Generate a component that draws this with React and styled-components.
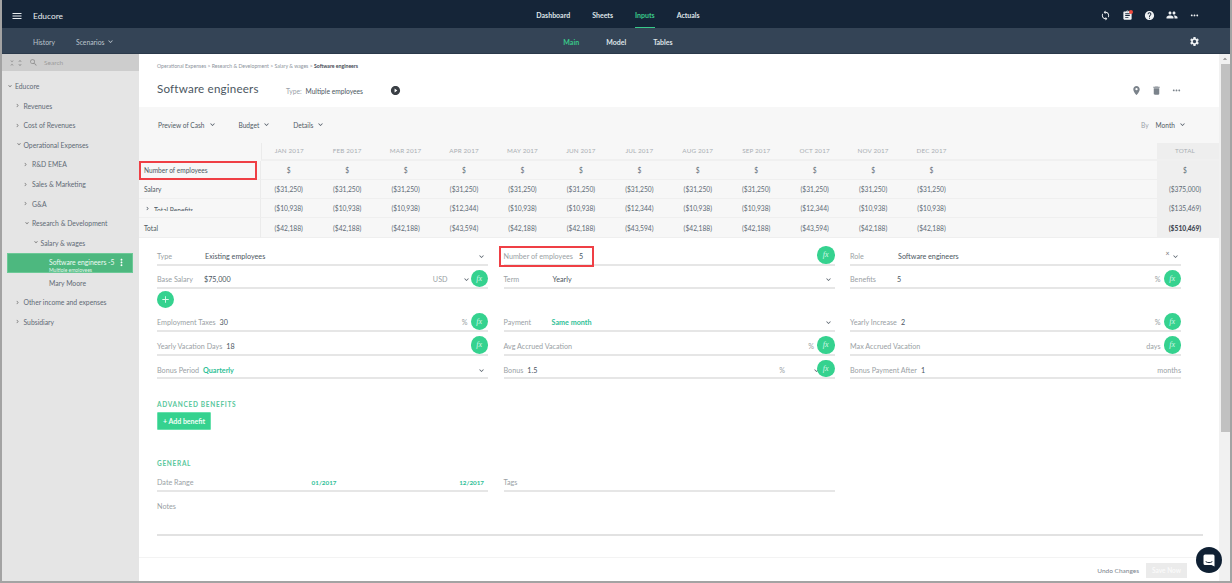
import React from 'react';
import styled, { createGlobalStyle } from 'styled-components';
import { MdMenu, MdSync, MdAssignment, MdHelp, MdPeople, MdMoreHoriz, MdMoreVert, MdSettings, MdPlace, MdDelete, MdExpandMore, MdPlayCircleFilled, MdSearch, MdUnfoldLess, MdUnfoldMore, MdChevronRight, MdAdd, MdArrowDropUp } from 'react-icons/md';

const Global = createGlobalStyle`
  html, body { margin: 0; padding: 0; height: 583px; overflow: hidden; }
  body { font-family: Lato, "Liberation Sans", sans-serif; color: #4a5562; }
  * { box-sizing: border-box; }
`;
const Frame = styled.div`
  width: 1232px; height: 583px; background: #a3a3a3; padding: 0 2px 2px;
  display: flex; flex-direction: column; position: relative; overflow: hidden;
`;
const TopBar = styled.header`
  height: 28px; background: #152538; color: #e8ecef; display: grid;
  grid-template-columns: 1fr auto 1fr; align-items: center; flex: none;
`;
const Brand = styled.div`display: flex; align-items: center; font-size: 8.4px; gap: 10px; padding: 3px 0 0 9px;`;
const NavGroup = styled.nav`display: flex; align-self: stretch; gap: ${p => p.$gap}px; padding-left: 4px;`;
const NavLink = styled.a`
  display: flex; align-items: center; font-size: 7px; font-weight: 700; padding-top: ${p => p.$pt || 3}px;
  color: ${p => (p.$active ? '#39c98a' : '#dfe4e8')};
  border-bottom: 1px solid ${p => (p.$underline ? '#39c98a' : 'transparent')};
`;
const IconGroup = styled.div`
  display: flex; justify-content: flex-end; align-items: center; gap: ${p => p.$gap || 10.5}px;
  padding: ${p => p.$pt || 0}px ${p => p.$pr || 0}px 0 0; color: ${p => p.$color || '#eef1f3'};
`;
const BadgedIcon = styled.span`
  display: flex; position: relative;
  &::after { content: ''; position: absolute; top: 0; right: 0; width: 4px; height: 4px; border-radius: 50%; background: #ef4b3f; }
`;
const SubBar = styled.div`
  height: 26px; background: #344456; border-bottom: 1px solid #2a394a; color: #d5dbe0; display: grid;
  grid-template-columns: 1fr auto 1fr; align-items: center; flex: none;
`;
const SubLeft = styled.div`display: flex; align-items: center; gap: 21px; padding: 2px 0 0 31px; font-size: 6.8px; color: #bcc5cd;`;
const Inline = styled.span`display: inline-flex; align-items: center; gap: ${p => p.$gap || 1}px;`;
const Body = styled.div`flex: 1; min-height: 0; display: flex;`;
const Sidebar = styled.aside`width: 137px; flex: none; background: #e5e5e5; display: flex; flex-direction: column;`;
const SearchStrip = styled.div`
  height: 17px; background: #cdcdcd; display: flex; align-items: center; padding-left: 6px; color: #8d8d8d; font-size: 6.5px; flex: none;
`;
const SearchGlyph = styled.span`display: flex; margin: 0 6.5px 0 4.5px;`;
const SearchText = styled.span`color: #9c9c9c;`;
const Tree = styled.ul`list-style: none; margin: 0; padding: 5.3px 0 0;`;
const TreeItem = styled.li`
  height: 19.6px; display: flex; align-items: center; font-size: 6.8px; color: #5f6a75;
  padding-left: ${p => p.$level * 8.5 + 4}px; gap: 1px; white-space: nowrap;
`;
const TreeArrow = styled.span`display: flex; width: 8px; flex: none; color: #777; transform: rotate(${p => (p.$open ? 90 : 0)}deg) translateX(${p => (p.$open ? 0 : -1)}px);`;
const SelectedItem = styled.li`
  height: 20px; margin-left: 5px; width: 126px; background: #4db87f; color: #eefaf3; position: relative;
  padding: 3px 0 0 41px; font-size: 6.8px; line-height: 10.5px; overflow: hidden; white-space: nowrap;
  border: 1px solid #6cc997;
`;
const SubLabel = styled.div`font-size: 5px; line-height: 6px; color: #e6f7ed;`;
const Kebab = styled.span`position: absolute; right: 5px; top: 3px; display: flex; color: #fff;`;
const PlainLeaf = styled.li`
  height: 19.6px; display: flex; align-items: center; font-size: 6.8px; color: #5f6a75; padding: 1px 0 0 47px;
`;
const Main = styled.main`flex: 1; min-width: 0; display: flex; background: #fff;`;
const Content = styled.div`flex: 1; min-width: 0; display: flex; flex-direction: column;`;
const PageHead = styled.div`height: 53px; padding: 9px 37px 0 18px; flex: none;`;
const Crumbs = styled.div`font-size: 5.15px; color: #8c949c; height: 7px; line-height: 7px; white-space: nowrap; b { color: #3f4853; font-weight: 700; }`;
const TitleRow = styled.div`display: flex; align-items: center; margin-top: 7px; height: 24px;`;
const Title = styled.h1`margin: 0; font-size: 11.6px; font-weight: 400; color: #4c5762; letter-spacing: .2px; width: 129px; position: relative; top: -1px;`;
const TypeInfo = styled.span`font-size: 6.7px; color: #4c5762; width: 104px; padding-top: 3px; span { color: #98a0a8; margin-right: 2px; }`;
const PlayIcon = styled.span`display: flex; color: #3a3f45; margin-top: 2px;`;
const Spacer = styled.div`flex: 1;`;
const GrayBand = styled.section`background: #f7f7f7; flex: none; height: 130px; display: flex; flex-direction: column;`;
const FilterRow = styled.div`height: 36px; flex: none; display: flex; align-items: center; padding: 0 32px 1px 19px; font-size: 6.6px; color: #505a65; gap: 22px;`;
const ByLabel = styled.span`color: #9aa1a8; margin-right: -15px;`;
const Table = styled.div`
  display: grid; grid-template-columns: 122px repeat(12, 58.45px) 1fr 62px; grid-template-rows: 17.5px repeat(4, 19.3px); font-size: 6.7px; color: #606b76;
`;
const HeadCell = styled.div`
  display: flex; align-items: center; justify-content: center; color: #a9aeb3; font-size: 6.3px; letter-spacing: .15px;
  padding-right: ${p => (p.$total ? 6 : 3)}px;
  border-bottom: 2px solid ${p => (p.$blank ? 'transparent' : '#f0f0f0')};
  border-left: ${p => (p.$divider ? '1px solid #ebebeb' : 'none')};
  background: ${p => (p.$total ? '#eeeeee' : 'transparent')};
`;
const Cell = styled.div`
  display: flex; align-items: center; justify-content: center; background: ${p => (p.$total ? '#efefef' : 'transparent')};
  padding-right: ${p => (p.$total ? 6 : 3)}px;
  border-bottom: 1px solid #efefef; font-weight: ${p => (p.$bold ? 900 : 400)};
  color: ${p => (p.$bold ? '#3f4853' : '#606b76')};
`;
const LabelCell = styled.div`
  display: flex; align-items: center; padding-left: 5px; border-right: 1px solid #ebebeb; border-bottom: 1px solid #efefef;
  color: #4c5762; font-size: 6.6px; position: relative; white-space: nowrap;
`;
const Clipped = styled.span`display: block; height: 5px; overflow: hidden; line-height: 8px; margin-left: 3px;`;
const Marked = styled.span`
  position: absolute; left: 0; top: 0; width: 118px; height: 19.5px; border: 2px solid #ef3f45; pointer-events: none;
`;
const Form = styled.div`padding: 5px 38px 0 18px; flex: 1; min-height: 0; display: flex; flex-direction: column;`;
const FormGrid = styled.div`display: grid; grid-template-columns: 331px 331px 331px; column-gap: 15.5px;`;
const Field = styled.div`
  height: 23.6px; border-bottom: 2px solid #e6e6e6; display: flex; align-items: center; gap: ${p => p.$gap ?? 4}px; font-size: 7.2px; color: #4c5762;
  padding-top: 7px; white-space: nowrap;
`;
const Label = styled.span`color: #9a9fa5; width: ${p => (p.$w ? `${p.$w}px` : 'auto')}; flex: none;`;
const Value = styled.span`color: ${p => (p.$accent ? '#2fbf97' : '#4c5762')}; font-weight: ${p => (p.$accent ? 700 : 400)};`;
const Unit = styled.span`color: #9a9fa5; margin-left: auto; margin-right: ${p => p.$mr || 0}px;`;
const Chevron = styled.span`display: flex; margin-left: ${p => (p.$auto ? 'auto' : `${p.$ml || 0}px`)}; color: #555f69; flex: none; margin-right: ${p => p.$mr || 0}px;`;
const ClearMark = styled.span`margin-left: auto; margin-right: -4px; margin-top: -6px; font-size: 7px; color: #777;`;
const Fx = styled.span`
  width: 17.5px; height: 17.5px; border-radius: 50%; background: #35d28f; color: #d8f7e8; flex: none; display: flex; align-items: center; justify-content: center;
  font: italic 8px "Liberation Serif", serif; margin-left: ${p => (p.$tight ? '0' : 'auto')}; margin-top: -3px; position: relative;
`;
const Highlight = styled.span`
  display: flex; align-items: center; gap: 6px; position: relative;
  &::after { content: ''; position: absolute; left: -5px; right: -11px; top: -6px; bottom: -6px; border: 2px solid #ef3f45; pointer-events: none; }
`;
const PlusRow = styled.div`height: 17.4px; margin-top: 2px;`;
const PlusBtn = styled.span`width: 17px; height: 17px; border-radius: 50%; background: #35d28f; color: #dff9ec; display: flex; align-items: center; justify-content: center;`;
const SectionTitle = styled.div`
  font-size: 6.5px; font-weight: 700; color: #58c79c; letter-spacing: .7px; line-height: 8px; margin-top: ${p => p.$mt}px;
`;
const AddButton = styled.button`
  margin-top: 3px; width: 54px; height: 18px; background: #35d28f; border: 1px solid #67e0ac; border-radius: 1px; color: #f3fff9;
  font: 700 7px Lato, sans-serif; padding: 0; display: block;
`;
const DateField = styled(Field)`padding-right: 4px; gap: 0;`;
const DateValue = styled.span`
  color: #2fbf97; font-weight: 700; font-size: 6.3px; margin-left: ${p => (p.$last ? 'auto' : '118px')};
`;
const Notes = styled.div`
  margin-top: 4px; margin-right: -22px; height: 40px; border-bottom: 2px solid #e2e2e2; font-size: 7.2px; color: #9a9fa5; padding-top: 6px;
`;
const Footer = styled.footer`
  height: 24px; margin-top: auto; flex: none; border-top: 1px solid #f3f3f3; display: flex; align-items: center; justify-content: flex-end;
  padding: 1px 32px 0 0; gap: 7px; font-size: 6.5px; color: #7a838c;
`;
const SaveBtn = styled.button`
  width: 41px; height: 15px; border: 0; background: #ebebeb; color: #fafafa; font: 700 6.5px Lato, sans-serif; padding: 0;
`;
const Scrollbar = styled.div`width: 11px; flex: none; background: #f1f1f1; display: flex; flex-direction: column; align-items: center;`;
const ScrollArrow = styled.span`height: 10px; display: flex; align-items: center; color: #8a8a8a;`;
const ScrollThumb = styled.div`width: 9px; height: 368px; background: #c1c1c1; margin-left: 1px;`;
const Launcher = styled.div`
  position: absolute; right: 10px; bottom: 10px; width: 26px; height: 26px; border-radius: 50%; background: #0f2033;
  display: flex; align-items: center; justify-content: center; color: #fff;
`;

const months = ['JAN', 'FEB', 'MAR', 'APR', 'MAY', 'JUN', 'JUL', 'AUG', 'SEP', 'OCT', 'NOV', 'DEC'];
const quarterly = (a, b) => months.map((_, i) => ([3, 6, 9].includes(i) ? b : a));
const rows = [
  { key: 'n', values: Array(12).fill('$'), total: '$' },
  { key: 's', label: 'Salary', values: Array(12).fill('($31,250)'), total: '($375,000)' },
  { key: 'b', values: quarterly('($10,938)', '($12,344)'), total: '($135,469)' },
  { key: 't', label: 'Total', values: quarterly('($42,188)', '($43,594)'), total: '($510,469)', bold: true },
];
const Down = ({ size = 9 }) => <MdExpandMore size={size} />;

const tree1 = [
  [0, 'Educore', true], [1, 'Revenues'], [1, 'Cost of Revenues'], [1, 'Operational Expenses', true],
  [2, 'R&D EMEA'], [2, 'Sales & Marketing'], [2, 'G&A'], [2, 'Research & Development', true], [3, 'Salary & wages', true],
];

export default function App() {
  return (
    <Frame>
      <Global />
      <TopBar>
        <Brand><MdMenu size={12} />Educore</Brand>
        <NavGroup $gap={22}>
          <NavLink>Dashboard</NavLink>
          <NavLink>Sheets</NavLink>
          <NavLink $active $underline>Inputs</NavLink>
          <NavLink>Actuals</NavLink>
        </NavGroup>
        <IconGroup $gap={11} $pr={30} $pt={2}>
          <MdSync size={11} />
          <BadgedIcon><MdAssignment size={11} /></BadgedIcon>
          <MdHelp size={11} />
          <MdPeople size={12} />
          <MdMoreHoriz size={11} />
        </IconGroup>
      </TopBar>
      <SubBar>
        <SubLeft>
          <span>History</span>
          <Inline $gap={2}>Scenarios <MdExpandMore size={9} /></Inline>
        </SubLeft>
        <NavGroup $gap={27}>
          <NavLink $active $pt={3}>Main</NavLink>
          <NavLink $pt={3}>Model</NavLink>
          <NavLink $pt={3}>Tables</NavLink>
        </NavGroup>
        <IconGroup $pr={30} $pt={2}><MdSettings size={11} /></IconGroup>
      </SubBar>
      <Body>
        <Sidebar>
          <SearchStrip>
            <MdUnfoldLess size={8} />
            <MdUnfoldMore size={8} />
            <SearchGlyph><MdSearch size={9} /></SearchGlyph>
            <SearchText>Search</SearchText>
          </SearchStrip>
          <Tree>
            {tree1.map(([level, text, open]) => (
              <TreeItem key={text} $level={level}>
                <TreeArrow $open={open}><MdChevronRight size={7} /></TreeArrow>{text}
              </TreeItem>
            ))}
            <SelectedItem>
              Software engineers -5
              <SubLabel>Multiple employees</SubLabel>
              <Kebab><MdMoreVert size={11} /></Kebab>
            </SelectedItem>
            <PlainLeaf>Mary Moore</PlainLeaf>
            <TreeItem $level={1}><TreeArrow><MdChevronRight size={7} /></TreeArrow>Other income and expenses</TreeItem>
            <TreeItem $level={1}><TreeArrow><MdChevronRight size={7} /></TreeArrow>Subsidiary</TreeItem>
          </Tree>
        </Sidebar>
        <Main>
          <Content>
            <PageHead>
              <Crumbs>Operational Expenses &gt; Research &amp; Development &gt; Salary &amp; wages &gt; <b>Software engineers</b></Crumbs>
              <TitleRow>
                <Title>Software engineers</Title>
                <TypeInfo><span>Type:</span> Multiple employees</TypeInfo>
                <PlayIcon><MdPlayCircleFilled size={11} /></PlayIcon>
                <Spacer />
                <IconGroup $gap={9} $color="#7b838b" $pt={3}><MdPlace size={11} /><MdDelete size={11} /><MdMoreHoriz size={11} /></IconGroup>
              </TitleRow>
            </PageHead>
            <GrayBand>
              <FilterRow>
                <Inline $gap={3}>Preview of Cash <Down /></Inline>
                <Inline $gap={3}>Budget <Down /></Inline>
                <Inline $gap={3}>Details <Down /></Inline>
                <Spacer />
                <ByLabel>By</ByLabel>
                <Inline $gap={3}>Month <Down /></Inline>
              </FilterRow>
              <Table>
                <HeadCell $blank />
                {months.map((m, i) => <HeadCell key={m} $divider={i === 0}>{m} 2017</HeadCell>)}
                <HeadCell />
                <HeadCell $total>TOTAL</HeadCell>
                {rows.map(r => (
                  <React.Fragment key={r.key}>
                    <LabelCell>
                      {r.key === 'n' && <>Number of employees<Marked /></>}
                      {r.label}
                      {r.key === 'b' && <><MdChevronRight size={7} /><Clipped>Total Benefits</Clipped></>}
                    </LabelCell>
                    {r.values.map((v, i) => <Cell key={i}>{v}</Cell>)}
                    <Cell />
                    <Cell $total $bold={r.bold}>{r.total}</Cell>
                  </React.Fragment>
                ))}
              </Table>
            </GrayBand>
            <Form>
              <FormGrid>
                <Field $gap={0}><Label $w={48}>Type</Label><Value>Existing employees</Value><Chevron $auto $mr={2}><Down /></Chevron></Field>
                <Field><Highlight><Label>Number of employees</Label><Value>5</Value></Highlight><Fx>fx</Fx></Field>
                <Field $gap={0}><Label $w={48}>Role</Label><Value>Software engineers</Value><ClearMark>×</ClearMark><Chevron $ml={5} $mr={1.5}><Down /></Chevron></Field>

                <Field $gap={0}><Label $w={47}>Base Salary</Label><Value>$75,000</Value><Unit>USD</Unit><Chevron $ml={14} $mr={0}><Down /></Chevron><Fx $tight>fx</Fx></Field>
                <Field $gap={0}><Label $w={49}>Term</Label><Value>Yearly</Value><Chevron $auto $mr={2}><Down /></Chevron></Field>
                <Field $gap={0}><Label $w={47}>Benefits</Label><Value>5</Value><Unit $mr={3}>%</Unit><Fx $tight>fx</Fx></Field>
              </FormGrid>
              <PlusRow><PlusBtn><MdAdd size={11} /></PlusBtn></PlusRow>
              <FormGrid>
                <Field><Label>Employment Taxes</Label><Value>30</Value><Unit $mr={-1}>%</Unit><Fx $tight>fx</Fx></Field>
                <Field $gap={0}><Label $w={48}>Payment</Label><Value $accent>Same month</Value><Chevron $auto $mr={2}><Down /></Chevron></Field>
                <Field><Label>Yearly Increase</Label><Value>2</Value><Unit $mr={-1}>%</Unit><Fx $tight>fx</Fx></Field>

                <Field><Label>Yearly Vacation Days</Label><Value>18</Value><Fx>fx</Fx></Field>
                <Field><Label>Avg Accrued Vacation</Label><Unit $mr={-1}>%</Unit><Fx $tight>fx</Fx></Field>
                <Field><Label>Max Accrued Vacation</Label><Unit $mr={-1}>days</Unit><Fx $tight>fx</Fx></Field>

                <Field><Label>Bonus Period</Label><Value $accent>Quarterly</Value><Chevron $auto $mr={2}><Down /></Chevron></Field>
                <Field><Label>Bonus</Label><Value>1.5</Value><Unit $mr={23}>%</Unit><Chevron $mr={-8}><Down /></Chevron><Fx $tight>fx</Fx></Field>
                <Field><Label>Bonus Payment After</Label><Value>1</Value><Unit>months</Unit></Field>
              </FormGrid>
              <SectionTitle $mt={22}>ADVANCED BENEFITS</SectionTitle>
              <AddButton>+ Add benefit</AddButton>
              <SectionTitle $mt={30}>GENERAL</SectionTitle>
              <FormGrid>
                <DateField><Label>Date Range</Label><DateValue>01/2017</DateValue><DateValue $last>12/2017</DateValue></DateField>
                <Field><Label>Tags</Label></Field>
              </FormGrid>
              <Notes>Notes</Notes>
            </Form>
            <Footer>
              <span>Undo Changes</span>
              <SaveBtn>Save Now</SaveBtn>
            </Footer>
          </Content>
          <Scrollbar>
            <ScrollArrow><MdArrowDropUp size={10} /></ScrollArrow>
            <ScrollThumb />
          </Scrollbar>
        </Main>
      </Body>
      <Launcher>
        <svg width="12" height="13" viewBox="0 0 12 13" fill="none">
          <path d="M2 0.5h8a1.5 1.5 0 0 1 1.5 1.5v10.5L8.5 11H2A1.5 1.5 0 0 1 .5 9.5V2A1.5 1.5 0 0 1 2 .5z" fill="#fff" />
          <path d="M3 7.8c1.8 1.2 4.2 1.2 6 0" stroke="#0f2033" strokeWidth="1" strokeLinecap="round" />
        </svg>
      </Launcher>
    </Frame>
  );
}
